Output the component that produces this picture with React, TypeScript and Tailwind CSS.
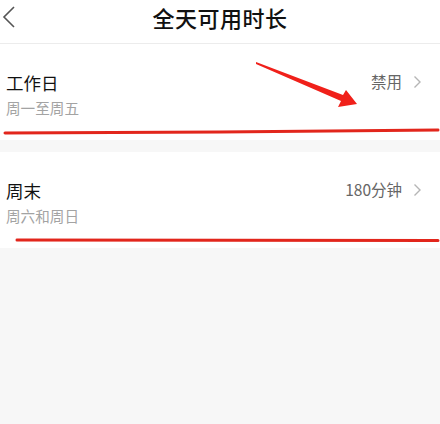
import React from 'react'

const font = { fontFamily: '"Noto Sans CJK SC", "Noto Sans", sans-serif' }

const Chevron = () => (
  <svg width="9" height="14" viewBox="0 0 9 14" className="ml-[11px]">
    <path d="M1.5 1.5 L7 7 L1.5 12.5" fill="none" stroke="#b5b5b5" strokeWidth="1.4" />
  </svg>
)

const Row = ({ title, sub, value }: { title: string; sub: string; value: string }) => (
  <div className="flex items-center justify-between bg-white h-[96px] pl-[6px] pr-[18px]">
    <div className="flex flex-col mt-[4px]">
      <span className="text-[17.5px] leading-[24px] text-[#111]">{title}</span>
      <span className="text-[14.6px] leading-[20px] mt-[3px] text-[#a3a3a3]">{sub}</span>
    </div>
    <div className="flex items-center -mt-[20px]">
      <span className="text-[15.5px] text-[#666]">{value}</span>
      <Chevron />
    </div>
  </div>
)

export default function App() {
  return (
    <div className="relative w-[440px] h-[424px] bg-[#f7f7f7] overflow-hidden" style={font}>
      <div className="relative flex items-center justify-center h-[44px] bg-white border-b border-[#ececec]">
        <svg width="14" height="24" viewBox="0 0 14 24" className="absolute left-[2px] top-[5px]">
          <path d="M12 2 L2 12 L12 22" fill="none" stroke="#555" strokeWidth="1.6" />
        </svg>
        <span className="text-[22px] font-medium text-[#111] -mt-[8px] tracking-[0.5px]">全天可用时长</span>
      </div>
      <Row title="工作日" sub="周一至周五" value="禁用" />
      <div className="h-[12px]" />
      <Row title="周末" sub="周六和周日" value="180分钟" />

      {/* red annotations */}
      <svg className="absolute left-0 top-0 pointer-events-none" width="440" height="424">
        <path d="M5 133 L220 132 L438 130" fill="none" stroke="#e2261c" strokeWidth="3" strokeLinecap="round" />
        <path d="M17 240 L438 240.5" fill="none" stroke="#e2261c" strokeWidth="3" strokeLinecap="round" />
        <polygon points="256,62 343,95 346,90 357,104 338,107 341,101 256,64" fill="#f0201a" />
      </svg>
    </div>
  )
}
